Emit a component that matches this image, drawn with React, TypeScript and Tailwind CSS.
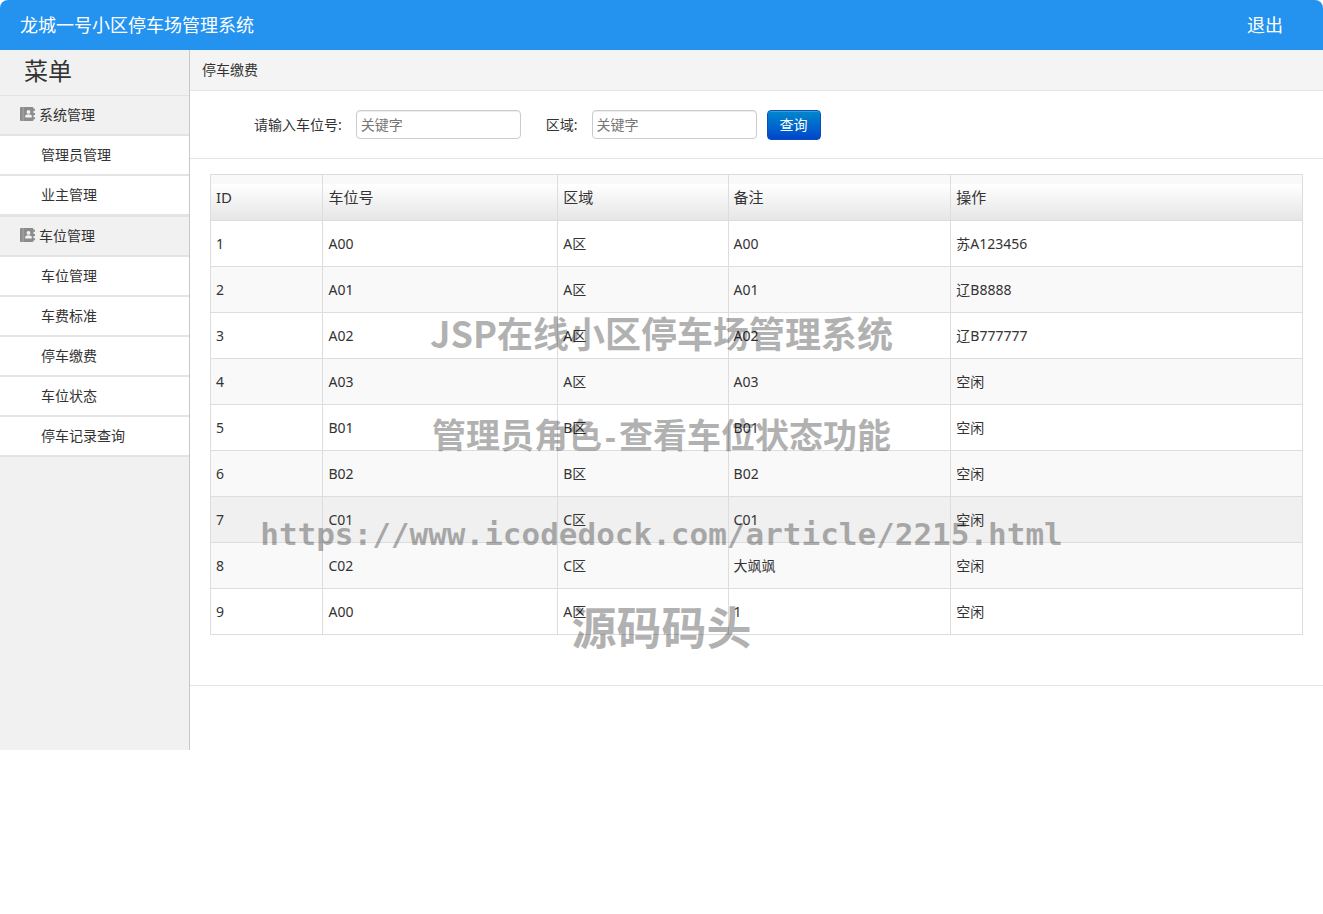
type MenuGroup = { title: string; items: string[] };

const menu: MenuGroup[] = [
  { title: "系统管理", items: ["管理员管理", "业主管理"] },
  { title: "车位管理", items: ["车位管理", "车费标准", "停车缴费", "车位状态", "停车记录查询"] },
];

const columns = [
  { label: "ID", width: "w-[10.3%]" },
  { label: "车位号", width: "w-[21.5%]" },
  { label: "区域", width: "w-[15.6%]" },
  { label: "备注", width: "w-[20.4%]" },
  { label: "操作", width: "w-[32.2%]" },
];

const rows = [
  ["1", "A00", "A区", "A00", "苏A123456"],
  ["2", "A01", "A区", "A01", "辽B8888"],
  ["3", "A02", "A区", "A02", "辽B777777"],
  ["4", "A03", "A区", "A03", "空闲"],
  ["5", "B01", "B区", "B01", "空闲"],
  ["6", "B02", "B区", "B02", "空闲"],
  ["7", "C01", "C区", "C01", "空闲"],
  ["8", "C02", "C区", "大飒飒", "空闲"],
  ["9", "A00", "A区", "1", "空闲"],
];

const HIGHLIGHTED_ROW = 6;

function rowBackground(index: number) {
  if (index === HIGHLIGHTED_ROW) return "bg-[#f0f0f0]";
  return index % 2 === 1 ? "bg-[#f9f9f9]" : "bg-white";
}

function BookIcon() {
  return (
    <svg viewBox="0 0 15 14" className="mb-[2px] h-[14px] w-[15px] shrink-0" aria-hidden="true">
      <path
        fill="#8c8c8c"
        d="M1 0h11.5a1 1 0 0 1 1 1v.8H15v2h-1.5v2.2H15v2h-1.5v2.2H15v2h-1.5v.8a1 1 0 0 1-1 1H1a1 1 0 0 1-1-1V1a1 1 0 0 1 1-1z"
      />
      <path fill="#b4b4b4" d="M2.7 0h.7v14h-.7z" />
      <circle cx="8.5" cy="4.9" r="1.9" fill="#f1f1f1" />
      <path fill="#f1f1f1" d="M5.2 10.4V9.1c0-1.1 1.5-1.8 3.3-1.8s3.3.7 3.3 1.8v1.3z" />
    </svg>
  );
}

function Header() {
  return (
    <header className="flex h-[50px] items-center justify-between rounded-t-lg bg-[#2493f0] pr-10 pl-5 text-lg text-white">
      <h1>龙城一号小区停车场管理系统</h1>
      <a href="#logout">退出</a>
    </header>
  );
}

function Sidebar() {
  return (
    <nav className="min-h-[700px] w-[190px] shrink-0 border-r border-[#c8c8c8] bg-[#f1f1f1]">
      <h2 className="flex h-[46px] items-center border-b border-[#e2e2e2] pb-1 pl-6 text-2xl">菜单</h2>
      {menu.map((group, i) => (
        <section key={group.title} className={i > 0 ? "border-t border-[#e4e4e4]" : ""}>
          <h3 className="flex h-10 items-center gap-1 border-b-2 border-[#e4e4e4] pl-5">
            <BookIcon />
            {group.title}
          </h3>
          <ul>
            {group.items.map((item) => (
              <li key={item}>
                <a
                  href={`#${item}`}
                  className="flex h-10 items-center border-b-2 border-[#e4e4e4] bg-white pl-[41px]"
                >
                  {item}
                </a>
              </li>
            ))}
          </ul>
        </section>
      ))}
    </nav>
  );
}

function SearchForm() {
  const input =
    "h-[29px] w-[165px] rounded border border-[#ccc] bg-white px-1 shadow-[inset_0_1px_1px_rgba(0,0,0,0.075)] outline-none placeholder:text-[#777]";
  return (
    <form
      className="flex h-[68px] items-center border-b border-[#e4e4e4] pl-16"
      onSubmit={(e) => e.preventDefault()}
    >
      <label htmlFor="spot" className="mr-[14px]">
        请输入车位号:
      </label>
      <input id="spot" type="text" placeholder="关键字" className={input} />
      <label htmlFor="area" className="mr-[14px] ml-[25px]">
        区域:
      </label>
      <input id="area" type="text" placeholder="关键字" className={input} />
      <button
        type="submit"
        className="ml-[10px] h-[30px] rounded border border-[#0a50b8] bg-linear-to-b from-[#0088cc] to-[#0044cc] px-3 text-white shadow-[inset_0_1px_0_rgba(255,255,255,0.2)]"
      >
        查询
      </button>
    </form>
  );
}

function SpotTable() {
  return (
    <table className="w-full table-fixed border-collapse border border-[#ddd]">
      <thead>
        <tr className="h-[46px] bg-[linear-gradient(to_bottom,#f9f9f9_9px,#ffffff_9px,#e5e5e5)]">
          {columns.map((c) => (
            <th key={c.label} className={`${c.width} border border-[#ddd] px-[5px] text-left text-[15px] font-normal`}>
              {c.label}
            </th>
          ))}
        </tr>
      </thead>
      <tbody>
        {rows.map((row, i) => (
          <tr key={row[0]} className={`h-[46px] ${rowBackground(i)}`}>
            {row.map((cell, j) => (
              <td key={j} className="border border-[#ddd] px-[5px]">
                {cell}
              </td>
            ))}
          </tr>
        ))}
      </tbody>
    </table>
  );
}

function Watermark() {
  return (
    <div className="pointer-events-none absolute inset-x-0 top-[302px] flex flex-col items-center font-['Noto_Sans_CJK_SC',sans-serif] font-bold whitespace-nowrap text-black opacity-30">
      <p className="text-[36px] leading-[60px]">JSP在线小区停车场管理系统</p>
      <p className="mt-[42px] text-[34px] leading-[60px]">
        管理员角色<span className="font-['DejaVu_Sans_Mono',monospace] text-[28px]">-</span>查看车位状态功能
      </p>
      <p className="mt-[35px] font-['DejaVu_Sans_Mono',monospace] text-[31px] leading-[60px]">
        https://www.icodedock.com/article/2215.html
      </p>
      <p className="mt-8 text-[45px] leading-[60px]">源码码头</p>
    </div>
  );
}

export default function App() {
  return (
    <div className="relative min-h-screen rounded-lg bg-white font-['Noto_Sans','Noto_Sans_CJK_SC',sans-serif] text-sm text-[#333]">
      <Header />
      <div className="flex">
        <Sidebar />
        <main className="min-w-0 flex-1">
          <h2 className="flex h-[41px] items-center border-b border-[#e4e4e4] bg-[#f4f4f4] pl-3">停车缴费</h2>
          <SearchForm />
          <div className="border-b border-[#e4e4e4] px-5 pt-[15px] pb-[50px]">
            <SpotTable />
          </div>
        </main>
      </div>
      <Watermark />
    </div>
  );
}
